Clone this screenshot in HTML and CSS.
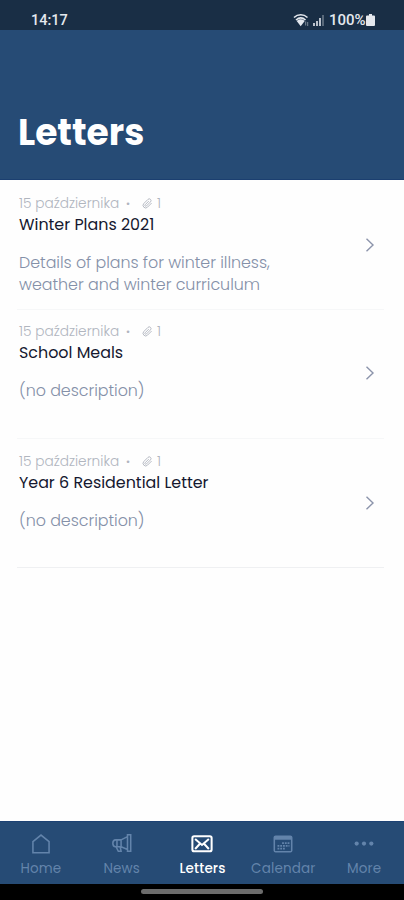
FILE: index.html
```
<!doctype html>
<html lang="en">
<head>
  <meta charset="utf-8">
  <meta name="viewport" content="width=device-width, initial-scale=1">
  <title>Letters</title>
  <link rel="stylesheet" href="styles.css">
</head>

<body class="app">
  <svg width="0" height="0" class="sprite">
    <symbol id="clip" viewBox="0 0 24 24">
      <path d="M21 11l-9 9a5.500 5.500 0 0 1-8-8l9-9a3.800 3.800 0 0 1 5.500 5.500l-9 9a1.900 1.900 0 0 1-2.700-2.700l8-8"/>
    </symbol>
    <symbol id="chevron" viewBox="0 0 10 14">
      <path d="M1.500 0.800L8 7L1.500 13.200"/>
    </symbol>
  </svg>

  <div class="status-bar">
    <span class="time">14:17</span>
    <div class="status-right">
      <svg class="wifi" viewBox="0 0 16 14">
        <path d="M1 4.500C5 .9 10.500.9 14.500 4.500M3 7C6 4.300 9.500 4.300 12.500 7"/>
        <path class="solid" d="M4.800 8.200Q7.700 5.800 10.600 8.200L7.700 12z"/>
        <path class="arrows" d="M12.700 8.500v4M14.700 9v4"/>
      </svg>
      <svg class="signal" viewBox="0 0 12 12">
        <path d="M0 9h2v3H0zM3 7h2v5H3zM6 4h2v8H6z"/>
        <path class="dim" d="M9 1h2v11H9z"/>
      </svg>
      <span class="percent">100%</span>
      <svg class="battery" viewBox="0 0 9 12">
        <path d="M3 0h3v1.500h2q1 0 1 1V11q0 1-1 1H1q-1 0-1-1V2.500q0-1 1-1h2z"/>
      </svg>
    </div>
  </div>

  <header class="header">
    <h1>Letters</h1>
  </header>

  <main class="list">
    <div class="letter">
      <div class="letter-text">
        <div class="meta"><span class="date">15 października</span><span class="dot">•</span><svg class="clip"><use href="#clip"/></svg><span>1</span></div>
        <h2>Winter Plans 2021</h2>
        <p>Details of plans for winter illness,<br>weather and winter curriculum</p>
      </div>
      <svg class="chevron"><use href="#chevron"/></svg>
    </div>
    <div class="letter">
      <div class="letter-text">
        <div class="meta"><span class="date">15 października</span><span class="dot">•</span><svg class="clip"><use href="#clip"/></svg><span>1</span></div>
        <h2>School Meals</h2>
        <p>(no description)</p>
      </div>
      <svg class="chevron"><use href="#chevron"/></svg>
    </div>
    <div class="letter">
      <div class="letter-text">
        <div class="meta"><span class="date">15 października</span><span class="dot">•</span><svg class="clip"><use href="#clip"/></svg><span>1</span></div>
        <h2>Year 6 Residential Letter</h2>
        <p>(no description)</p>
      </div>
      <svg class="chevron"><use href="#chevron"/></svg>
    </div>
  </main>

  <nav class="tabs">
    <a class="tab">
      <svg viewBox="0 0 24 24"><path d="M3.200 9.500L12 2.300l8.800 7.200V21.500H3.200z"/></svg>
      <span>Home</span>
    </a>
    <a class="tab">
      <svg viewBox="0 0 24 24"><path d="M18 2h3.500v18H18zM18 4L11 7.500v7.500l7 3M11 7.500H5q-3 0-3 3.700T5 15h6M6.500 7.500V15M5.500 15l2.500 5h3l-1-5"/></svg>
      <span>News</span>
    </a>
    <a class="tab active">
      <svg viewBox="0 0 24 24"><rect x="1.500" y="3.500" width="21" height="16.500" rx="2"/><path d="M4.500 6.500l7.500 6.500L19.500 6.500M4.500 17.500l5-5.500M19.500 17.500l-5-5.500"/></svg>
      <span>Letters</span>
    </a>
    <a class="tab">
      <svg viewBox="0 0 24 24"><rect x="2.500" y="3.500" width="19" height="17" rx="1.500"/><path d="M2.500 5h19M2.500 6.500h19"/><path class="days" d="M11 11h8M6 14h13M6 17h9"/></svg>
      <span>Calendar</span>
    </a>
    <a class="tab more">
      <svg viewBox="0 0 24 24"><circle cx="4" cy="11.500" r="2.300"/><circle cx="12" cy="11.500" r="2.300"/><circle cx="20" cy="11.500" r="2.300"/></svg>
      <span>More</span>
    </a>
  </nav>
  <div class="gesture-bar"><div class="handle"></div></div>
</body>
</html>
```

FILE: styles.css
```
* {
  box-sizing: border-box;
}

.app {
  margin: 0;
  height: 900px;
  display: flex;
  flex-direction: column;
  overflow: hidden;
  background: #fefefe;
  font-family: Poppins, Inter, sans-serif;
}

.sprite {
  display: none;
}

svg {
  fill: none;
  stroke: currentColor;
  flex: none;
}

.status-bar {
  height: 30px;
  padding: 9px 29px 0 31px;
  display: flex;
  justify-content: space-between;
  background: #192e45;
  color: #e4e8ee;
  font: 500 14.500px/21px Roboto, sans-serif;
}

.time {
  padding-top: 1px;
}

.status-right {
  display: flex;
  align-items: center;
}

.wifi {
  width: 16px;
  height: 14px;
  stroke-width: 1.600;
  margin-right: 4px;
}

.wifi .solid {
  fill: currentColor;
}

.wifi .arrows {
  stroke-width: 1;
  opacity: .5;
}

.signal {
  width: 12px;
  height: 12px;
  margin-right: 4px;
  fill: currentColor;
  stroke: none;
  opacity: .8;
}

.signal .dim {
  opacity: .4;
}

.percent {
  padding-top: 1px;
  font-size: 15px;
  width: 37px;
}

.battery {
  width: 9px;
  height: 12px;
  fill: currentColor;
  stroke: none;
}

.header {
  height: 150px;
  padding: 80px 18px 0;
  background: #264b75;
  border-bottom: 1px solid #1b3f70;
  color: #fff;
}

.header h1 {
  margin: 0;
  font-size: 36px;
  line-height: 45px;
  font-weight: 700;
}

.list {
  flex: 1;
  padding: 0 20px 0 17px;
}

.letter {
  height: 129px;
  padding: 13px 9px 0 2px;
  display: flex;
  justify-content: space-between;
  border-bottom: 1px solid #f6f7f8;
}

.letter:first-child {
  height: 130px;
  padding-top: 14px;
}

.letter:nth-child(2) {
  padding-top: 12px;
}

.letter:last-child {
  border-color: #eff0f2;
}

.meta {
  height: 19px;
  display: flex;
  align-items: center;
  color: #b0b5be;
  font-size: 13.700px;
  font-weight: 300;
}

.date {
  width: 107px;
}

.dot {
  width: 16px;
  font-size: 11px;
}

.clip {
  width: 11px;
  height: 11px;
  margin-right: 4px;
  stroke-width: 2;
}

.letter h2 {
  margin: 0;
  color: #15182f;
  font-size: 15.900px;
  line-height: 24px;
  font-weight: 400;
}

.letter p {
  margin: 15px 0 0;
  color: #8490a8;
  font-size: 15.900px;
  line-height: 22px;
  font-weight: 300;
  letter-spacing: -0.04px;
}

.chevron {
  width: 10px;
  height: 14px;
  margin-top: 44px;
  color: #8c94ab;
  stroke-width: 1.400;
}

.tabs {
  height: 63px;
  padding-top: 11px;
  display: grid;
  grid-template-columns: repeat(5, 1fr);
  background: #264b75;
  border-top: 1px solid #1d4274;
}

.tab {
  display: flex;
  flex-direction: column;
  align-items: center;
  padding-left: 1px;
  color: #6384ab;
  font-size: 13.500px;
  line-height: 21px;
  letter-spacing: 0.15px;
}

.tab svg {
  width: 22px;
  height: 22px;
  margin-bottom: 3px;
  stroke-width: 1.700;
}

.tab .days {
  stroke-width: 1.800;
  stroke-dasharray: 2 1;
}

.tab.active {
  color: #fff;
  font-weight: 500;
}

.tab.active svg {
  stroke-width: 2.200;
}

.more svg {
  fill: currentColor;
  stroke: none;
}

.gesture-bar {
  height: 16px;
  padding-top: 5px;
  display: flex;
  justify-content: center;
  background: #000;
}

.handle {
  width: 122px;
  height: 5px;
  border-radius: 3px;
  background: #6c6c6c;
}
```
